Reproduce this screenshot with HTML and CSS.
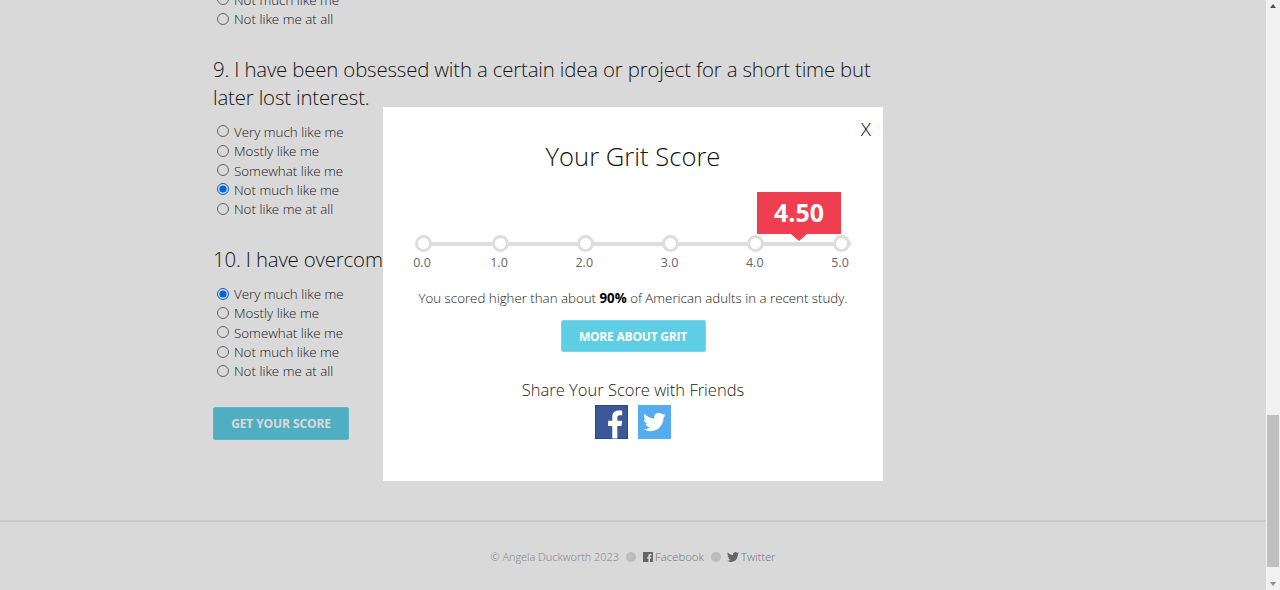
FILE: index.html
```html
<!DOCTYPE html>
<html lang="en">
<head>
<meta charset="utf-8">
<title>Grit Scale</title>
<link rel="stylesheet" href="styles.css">
</head>
<body>
<div class="window">
  <div class="page">
    <main class="survey">
      <section class="question">
        <h2>8. I finish whatever I begin.</h2>
        <label class="option"><input type="radio" name="q8">Very much like me</label>
        <label class="option"><input type="radio" name="q8">Mostly like me</label>
        <label class="option"><input type="radio" name="q8">Somewhat like me</label>
        <label class="option"><input type="radio" name="q8">Not much like me</label>
        <label class="option"><input type="radio" name="q8">Not like me at all</label>
      </section>
      <section class="question">
        <h2>9. I have been obsessed with a certain idea or project for a short time but later lost interest.</h2>
        <label class="option"><input type="radio" name="q9">Very much like me</label>
        <label class="option"><input type="radio" name="q9">Mostly like me</label>
        <label class="option"><input type="radio" name="q9">Somewhat like me</label>
        <label class="option"><input type="radio" name="q9" checked>Not much like me</label>
        <label class="option"><input type="radio" name="q9">Not like me at all</label>
      </section>
      <section class="question">
        <h2>10. I have overcome setbacks to conquer an important challenge.</h2>
        <label class="option"><input type="radio" name="q10" checked>Very much like me</label>
        <label class="option"><input type="radio" name="q10">Mostly like me</label>
        <label class="option"><input type="radio" name="q10">Somewhat like me</label>
        <label class="option"><input type="radio" name="q10">Not much like me</label>
        <label class="option"><input type="radio" name="q10">Not like me at all</label>
      </section>
      <a class="btn btn-submit">GET YOUR SCORE</a>
    </main>
    <footer class="footer">
      <span class="copyright">© Angela Duckworth 2023</span>
      <i class="dot"></i>
      <span class="foot-link">
        <svg class="foot-icon" viewBox="0 0 12 12"><path fill="#777" d="M1.500 1h9A.5.5 0 0 1 11 1.500v9a.5.5 0 0 1-.5.500H8V7.400h1.300l.2-1.500H8V5c0-.5.200-.8.800-.8h.8V2.900C9.300 2.800 8.900 2.800 8.400 2.800 7.200 2.800 6.400 3.500 6.400 4.800v1.100H5.100v1.500h1.300V11H1.500a.5.5 0 0 1-.5-.5v-9a.5.5 0 0 1 .5-.5z"/></svg>Facebook
      </span>
      <i class="dot"></i>
      <span class="foot-link foot-link-tw">
        <svg class="foot-icon foot-icon-tw" viewBox="0 0 24 24"><path fill="#777" d="M23.953 4.570a10 10 0 01-2.825.775 4.958 4.958 0 002.163-2.723c-.951.555-2.005.959-3.127 1.184a4.920 4.920 0 00-8.384 4.482C7.690 8.095 4.067 6.130 1.640 3.162a4.822 4.822 0 00-.666 2.475c0 1.710.870 3.213 2.188 4.096a4.904 4.904 0 01-2.228-.616v.060a4.923 4.923 0 003.946 4.827 4.996 4.996 0 01-2.212.085 4.936 4.936 0 004.604 3.417 9.867 9.867 0 01-6.102 2.105c-.390 0-.779-.023-1.170-.067a13.995 13.995 0 007.557 2.209c9.053 0 13.998-7.496 13.998-13.985 0-.210 0-.420-.015-.630A9.935 9.935 0 0024 4.590z"/></svg>Twitter
      </span>
    </footer>
    <div class="overlay">
      <div class="modal">
        <a class="close">X</a>
        <h1>Your Grit Score</h1>
        <div class="graph">
          <div class="flag">4.50</div>
          <div class="scale">
            <div class="tick"><i class="knob"></i><span>0.0</span></div>
            <div class="tick"><i class="knob"></i><span>1.0</span></div>
            <div class="tick"><i class="knob"></i><span>2.0</span></div>
            <div class="tick"><i class="knob"></i><span>3.0</span></div>
            <div class="tick"><i class="knob"></i><span>4.0</span></div>
            <div class="tick"><i class="knob"></i><span>5.0</span></div>
          </div>
        </div>
        <p class="result">You scored higher than about <b>90%</b> of American adults in a recent study.</p>
        <a class="btn btn-more">MORE ABOUT GRIT</a>
        <h3>Share Your Score with Friends</h3>
        <div class="share">
          <a class="share-fb">
            <svg viewBox="0 0 34 34" width="33" height="34"><path fill="#fff" d="M23 34V21h4.300l.7-5.200h-5v-3.300c0-1.500.4-2.500 2.500-2.500H28V5.400C27.500 5.300 26 5.200 24.200 5.200c-3.800 0-6.400 2.300-6.400 6.600v4h-4.300V21h4.300v13z"/></svg>
          </a>
          <a class="share-tw">
            <svg viewBox="-5.500 -5.500 35 35" width="33" height="34"><path fill="#fff" d="M23.953 4.570a10 10 0 01-2.825.775 4.958 4.958 0 002.163-2.723c-.951.555-2.005.959-3.127 1.184a4.920 4.920 0 00-8.384 4.482C7.690 8.095 4.067 6.130 1.640 3.162a4.822 4.822 0 00-.666 2.475c0 1.710.870 3.213 2.188 4.096a4.904 4.904 0 01-2.228-.616v.060a4.923 4.923 0 003.946 4.827 4.996 4.996 0 01-2.212.085 4.936 4.936 0 004.604 3.417 9.867 9.867 0 01-6.102 2.105c-.390 0-.779-.023-1.170-.067a13.995 13.995 0 007.557 2.209c9.053 0 13.998-7.496 13.998-13.985 0-.210 0-.420-.015-.630A9.935 9.935 0 0024 4.590z"/></svg>
          </a>
        </div>
      </div>
    </div>
  </div>
  <div class="scrollbar">
    <i class="arrow arrow-up"></i>
    <div class="track"><div class="thumb"></div></div>
    <i class="arrow arrow-down"></i>
  </div>
</div>
</body>
</html>
```
FILE: styles.css
```css
* { box-sizing: border-box; }
html, body { margin: 0; height: 100%; overflow: hidden; }
body {
  font-family: "Open Sans", "Noto Sans", sans-serif;
  font-weight: 300;
  color: #222;
  background: #fff;
}
.window { display: flex; height: 590px; width: 1280px; }
.page {
  position: relative;
  flex: 1;
  display: flex;
  flex-direction: column;
  justify-content: flex-end;
  overflow: hidden;
  background: #fff;
}
.survey { flex: none; padding-left: 213px; width: 900px; }
.question { margin-bottom: 27px; }
.question h2 {
  margin: 0 0 10.500px;
  font-size: 20.4px;
  line-height: 28px;
  font-weight: 300;
  letter-spacing: -0.165px;
  color: #1a1a1a;
}
.option {
  display: flex;
  align-items: center;
  height: 19.33px;
  padding-top: 2px;
  font-size: 13.35px;
  color: #222;
}
.option input { margin: 0 5.500px 1px 3.500px; width: 12px; height: 12px; flex: none; }
.btn {
  display: block;
  text-align: center;
  font-weight: 700;
  color: #fff;
  font-size: 12px;
  letter-spacing: -0.1px;
  background: #5fcde4;
  border: 1px solid #71d4e8;
  border-radius: 2px;
}
.btn-submit { width: 136px; height: 33px; line-height: 31px; margin: 19px 0 80px; }
.footer {
  flex: none;
  height: 70px;
  border-top: 2px solid #ececec;
  display: flex;
  align-items: center;
  justify-content: center;
  font-size: 11.4px;
  color: #999;
}
.copyright { font-size: 10.9px; }
.dot { width: 10px; height: 10px; border-radius: 50%; background: #ddd; margin: 1px 6px 0 7px; flex: none; }
.foot-link { display: flex; align-items: center; color: #888; }
.foot-link-tw { letter-spacing: -0.1px; }
.foot-icon { width: 12px; height: 12px; margin: 1px 1px 0 0; }
.foot-icon-tw { margin-right: 2px; }
.overlay {
  position: absolute;
  inset: 0;
  background: rgba(0, 0, 0, 0.15);
  display: flex;
  align-items: center;
  justify-content: center;
  padding-bottom: 2px;
}
.modal {
  position: relative;
  width: 500px;
  height: 374px;
  background: #fff;
  display: flex;
  flex-direction: column;
  align-items: center;
  padding-top: 34px;
}
.close { position: absolute; top: 12px; right: 12px; font-size: 19px; line-height: 20px; color: #111; font-weight: 300; }
.modal h1 { margin: 0; font-size: 25.6px; line-height: 32px; font-weight: 300; color: #111; }
.graph { position: relative; width: 428px; margin-top: 19px; height: 78px; padding-top: 43px; align-self: flex-start; margin-left: 40px; }
.flag {
  position: absolute;
  top: 0;
  left: 334px;
  width: 84px;
  height: 42px;
  background: #ee3e50;
  color: #fff;
  font-size: 25px;
  font-weight: 700;
  line-height: 41px;
  text-align: center;
}
.flag::after {
  content: "";
  position: absolute;
  left: 34px;
  top: 42px;
  border: 8px solid transparent;
  border-bottom: 0;
  border-top: 7px solid #ee3e50;
}
.scale {
  display: grid;
  grid-template-columns: 77px repeat(4, 85.25px) 0;
  position: relative;
}
.scale::before {
  content: "";
  position: absolute;
  left: 0;
  right: 0;
  top: 7px;
  height: 4px;
  background: #ddd;
}
.tick {
  position: relative;
  width: 40px;
  margin-left: -20px;
  display: flex;
  flex-direction: column;
  align-items: center;
  font-size: 12.5px;
  color: #666;
  font-weight: 400;
}
.knob { width: 17px; height: 17px; border-radius: 50%; background: #fff; border: 3px solid #ddd; }
.tick span { margin: 2px 2px 0 0; line-height: 18px; }
.result { margin: 19px 0 0; font-size: 13.3px; line-height: 18px; color: #222; }
.result b { color: #000; font-weight: 700; }
.btn-more { width: 145px; height: 32px; line-height: 31px; margin-top: 13px; letter-spacing: -0.2px; border-color: #7dd7ea; }
.modal h3 { margin: 27px 0 0; font-size: 16.5px; line-height: 22px; font-weight: 300; color: #222; }
.share { display: flex; gap: 10px; margin-top: 4px; }
.share a { display: block; width: 33px; height: 34px; }
.share svg { display: block; }
.share-fb { background: #3b5998; box-shadow: inset 0 0 0 1px #2b4886; }
.share-tw { background: #55acee; }
.scrollbar { width: 14px; flex: none; background: #f1f1f1; display: flex; flex-direction: column; padding-top: 14px; padding-bottom: 23px; position: relative; }
.track { flex: 1; display: flex; flex-direction: column; justify-content: flex-end; border-left: 1px solid #f1f1f1; }
.thumb { height: 152px; background: #bfbfbf; margin-right: 1px; }
.arrow { position: absolute; left: 3.500px; width: 0; height: 0; border: 3.500px solid transparent; }
.arrow-up { top: 4px; border-top: 0; border-bottom: 4px solid #505050; }
.arrow-down { bottom: 4px; border-bottom: 0; border-top: 4px solid #8a8a8a; }
```
